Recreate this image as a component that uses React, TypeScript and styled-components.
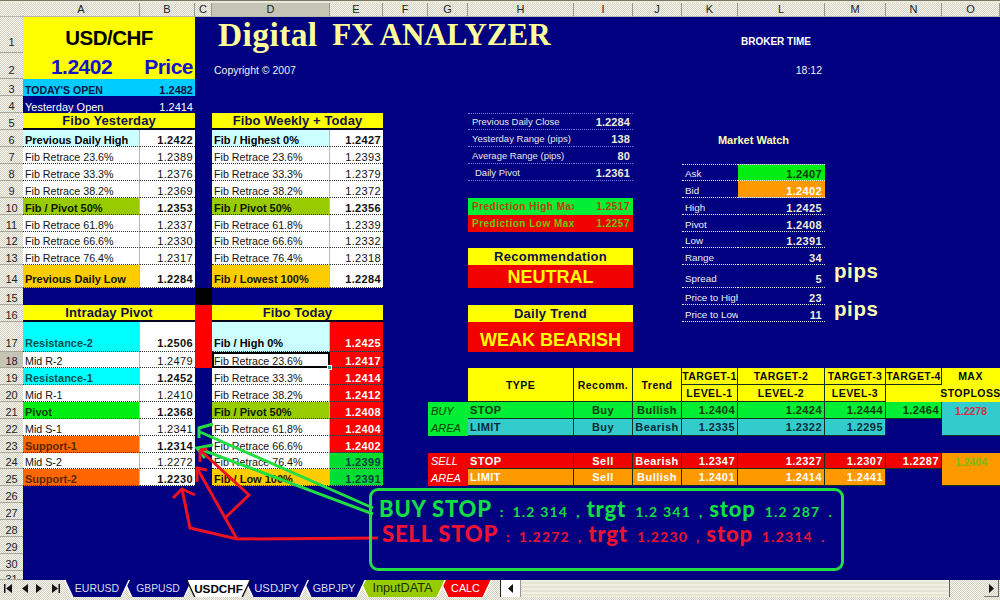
import React, { FC } from 'react';
import styled, { createGlobalStyle, css } from 'styled-components';

const COLUMNS: [string, number][] = [
  ['A', 117], ['B', 55], ['C', 17], ['D', 118], ['E', 53], ['F', 45], ['G', 40], ['H', 106],
  ['I', 59], ['J', 49], ['K', 56], ['L', 87], ['M', 61], ['N', 56], ['O', 58],
];
const ROWS = [
  36, 26, 17, 17, 17, 17, 17, 17, 17, 17, 17, 16, 17, 23, 17, 17, 30, 16, 17, 17, 17, 17, 17, 16, 17, 17, 17, 17, 17,
  17, 9,
];
const NAVY = '#000080';
const CHECKER = css`
  background: repeating-conic-gradient(#f7f6ee 0 25%, #d3d1c2 0 50%) 0 0 / 2px 2px;
`;

const GlobalStyle = createGlobalStyle`
  html, body { margin: 0; padding: 0; background: #ece9d8; }
  body { font-family: "Liberation Sans", Arial, sans-serif; }
`;

const Page = styled.div`
  position: relative;
  width: 1000px;
  height: 600px;
  overflow: hidden;
  display: flex;
  flex-direction: column;
  ${CHECKER}
`;

const TopEdge = styled.div`
  height: 3px;
  background: #ece9d8;
  border-top: 1px solid #77776a;
  box-sizing: border-box;
`;

const Sheet = styled.div`
  display: grid;
  grid-template-columns: 23px ${COLUMNS.map(([, w]) => `${w}px`).join(' ')};
  grid-template-rows: 14px ${ROWS.map((h) => `${h}px`).join(' ')};
  background: ${NAVY};
  font-size: 11px;
`;

const colIndex = (letter: string) => COLUMNS.findIndex(([l]) => l === letter) + 2;

// rows 14 and 17 are taller, their text sits a little higher than the bottom edge
const liftFor = (row: number) => (row === 1 ? 4 : row === 2 || row === 14 || row === 17 ? 2 : 0);

const ColHead = styled.div<{ $on?: boolean }>`
  ${CHECKER}
  ${(p) => p.$on && 'background: #c6c4b4;'}
  border-right: 1px solid #9a9a8c;
  border-bottom: 1px solid #b8b6a6;
  box-sizing: border-box;
  color: #222;
  font-size: 11px;
  line-height: 13px;
  text-align: center;
`;

const Corner = styled.div`
  ${CHECKER}
  border-bottom: 1px solid #b8b6a6;
`;

const RowHead = styled.div<{ $r: number; $on?: boolean }>`
  grid-column: 1;
  grid-row: ${(p) => p.$r + 1};
  ${CHECKER}
  ${(p) => p.$on && 'background: #c6c4b4;'}
  border-bottom: 1px solid #a8a698;
  box-sizing: border-box;
  display: flex;
  align-items: ${(p) => (p.$r === 31 ? 'flex-start' : 'flex-end')};
  justify-content: center;
  overflow: hidden;
  color: #222;
  font-size: 11px;
  line-height: 12px;
  padding-bottom: ${(p) => liftFor(p.$r)}px;
  padding-top: ${(p) => (p.$r === 31 ? 2 : 0)}px;
`;

type Place = { $c: string; $r: number; $cs?: number; $rs?: number };

const Cell = styled.div<Place>`
  grid-column: ${(p) => colIndex(p.$c)} / span ${(p) => p.$cs ?? 1};
  grid-row: ${(p) => p.$r + 1} / span ${(p) => p.$rs ?? 1};
  display: flex;
  align-items: flex-end;
  box-sizing: border-box;
  min-width: 0;
  padding: 0 2px ${(p) => liftFor(p.$r)}px 2px;
  line-height: 12px;
  white-space: pre;
`;

const Symbol = styled(Cell)`
  justify-content: center;
  align-items: center;
  background: #ffff00;
  color: #000;
  font-size: 20.5px;
  font-weight: 700;
  letter-spacing: -0.5px;
  line-height: 24px;
  padding: 5px 0 0;
`;

const PriceBig = styled(Cell)<{ $right?: boolean }>`
  background: #ffff00;
  color: #1414c8;
  font-size: 21px;
  font-weight: 700;
  letter-spacing: -0.5px;
  line-height: 24px;
  align-items: center;
  justify-content: ${(p) => (p.$right ? 'flex-end' : 'center')};
  padding-top: 2px;
  padding-bottom: 0;
`;

const OpenRow = styled(Cell)<{ $value?: boolean; $today?: boolean }>`
  ${(p) => (p.$today ? 'background: #00ccff; color: #04143c; font-weight: 700; font-size: 10.5px;' : 'color: #fff;')}
  ${(p) => p.$value && 'justify-content: flex-end; font-size: 11px;'}
`;

const Heading = styled(Cell)`
  background: #ffff00;
  color: #10104c;
  justify-content: center;
  align-items: center;
  font-size: 13px;
  font-weight: 700;
  letter-spacing: 0.1px;
  line-height: 15px;
  border-bottom: 2px solid #05051f;
`;

const BannerHead = styled(Heading)`
  letter-spacing: 0.28px;
  border-bottom: none;
`;

type Tone = 'plain' | 'ice' | 'olive' | 'amber' | 'cyan' | 'lime' | 'orange';
const TONES: Record<Tone, { bg: string; fg: string; bold: boolean }> = {
  plain: { bg: '#fff', fg: '#111', bold: false },
  ice: { bg: '#ccffff', fg: '#000', bold: true },
  olive: { bg: '#99cc00', fg: '#0a1a00', bold: true },
  amber: { bg: '#ffcc00', fg: '#141000', bold: true },
  cyan: { bg: '#00ffff', fg: '#004f4f', bold: true },
  lime: { bg: '#00ee11', fg: '#0a3a0a', bold: true },
  orange: { bg: '#ff6600', fg: '#5a2800', bold: true },
};

const RowLabel = styled(Cell)<{ $tone: Tone }>`
  background: ${(p) => TONES[p.$tone].bg};
  color: ${(p) => TONES[p.$tone].fg};
  font-size: ${(p) => (TONES[p.$tone].bold ? 11 : 10.7)}px;
  font-weight: ${(p) => (TONES[p.$tone].bold ? 700 : 400)};
  border-bottom: 1px dotted #333;
  border-right: 1px solid #bbb;
`;

type ValueTone = 'auto' | 'red' | 'green';
const RowValue = styled(Cell)<{ $bold?: boolean; $fill?: ValueTone }>`
  background: ${(p) => (p.$fill === 'red' ? '#ff0000' : p.$fill === 'green' ? '#00dd33' : '#fff')};
  color: ${(p) => (p.$fill === 'red' ? '#fff' : p.$fill === 'green' ? '#0a4040' : '#111')};
  font-weight: ${(p) => (p.$bold || p.$fill === 'red' || p.$fill === 'green' ? 700 : 400)};
  justify-content: flex-end;
  letter-spacing: 0.35px;
  border-bottom: 1px dotted #333;
`;

const ActiveCell = styled(RowLabel)`
  position: relative;
  outline: 2px solid #000;
  outline-offset: -2px;
  align-items: center;
  padding-top: 3px;
  &::after {
    content: '';
    position: absolute;
    right: -3px;
    bottom: -3px;
    width: 5px;
    height: 5px;
    background: #33a0a0;
    border: 1px solid #fff;
    box-sizing: border-box;
  }
`;

const Gutter = styled(Cell)<{ $black?: boolean }>`
  background: ${(p) => (p.$black ? '#000' : '#ff0000')};
`;

const Title = styled(Cell)`
  align-items: center;
  padding: 0 0 0 6px;
  color: #ffff99;
  font-family: "Liberation Serif", "Times New Roman", serif;
  font-size: 33.5px;
  font-weight: 700;
  letter-spacing: 0.4px;
  line-height: 36px;
  span {
    margin-left: -3px;
    font-size: 31px;
    letter-spacing: 0;
  }
`;

const Caption = styled(Cell)`
  color: #f2f2f2;
  font-size: 10.5px;
  line-height: 18px;
  padding-bottom: 0;
`;

const BrokerLabel = styled(Cell)`
  color: #fff;
  font-size: 10px;
  font-weight: 700;
  align-items: center;
  padding: 14px 0 0 3px;
`;

const BrokerClock = styled(Caption)`
  justify-content: flex-end;
  padding-right: 3px;
`;

const StatLabel = styled(Cell)<{ $inset?: boolean; $lead?: boolean }>`
  color: #e8e8e8;
  font-size: 9.5px;
  padding-left: ${(p) => (p.$inset ? 7 : 4)}px;
  padding-bottom: 1px;
  border-bottom: 1px dotted #7676ff;
  ${(p) => p.$lead && 'border-top: 1px dotted #7676ff;'}
`;

const StatValue = styled(Cell)<{ $lead?: boolean }>`
  color: #eeeed8;
  font-weight: 700;
  justify-content: flex-end;
  padding: 0 3px 1px 0;
  letter-spacing: 0.1px;
  border-bottom: 1px dotted #7676ff;
  ${(p) => p.$lead && 'border-top: 1px dotted #7676ff;'}
`;

const Forecast = styled(Cell)<{ $high?: boolean; $value?: boolean }>`
  background: ${(p) => (p.$high ? '#00ee33' : '#f00000')};
  color: ${(p) => (p.$high ? '#c83c08' : '#66cc00')};
  font-size: 10px;
  font-weight: 700;
  letter-spacing: 0.5px;
  overflow: hidden;
  align-items: center;
  padding: 0 0 0 4px;
  ${(p) => p.$value && 'justify-content: flex-end; padding-right: 3px;'}
`;

const Verdict = styled(Cell)<{ $low?: boolean }>`
  background: #f00000;
  color: #ffff00;
  font-size: 18px;
  font-weight: 700;
  line-height: 20px;
  justify-content: center;
  align-items: center;
  padding: ${(p) => (p.$low ? 5 : 0)}px 0 0;
`;

const WatchTitle = styled(Cell)`
  color: #ffffb0;
  font-size: 11px;
  font-weight: 700;
  justify-content: center;
  padding: 0 0 0 0;
  padding-bottom: 1px;
`;

const WatchLabel = styled(Cell)<{ $lead?: boolean }>`
  color: #f0f0f0;
  font-size: 9.8px;
  overflow: hidden;
  padding-left: 3px;
  padding-right: 0;
  border-bottom: 1px dotted #e8e8ff;
  ${(p) => p.$lead && 'border-top: 1px dotted #e8e8ff;'}
`;

const WatchValue = styled(Cell)<{ $fill?: string; $ink?: string; $lead?: boolean }>`
  background: ${(p) => p.$fill ?? 'transparent'};
  color: ${(p) => p.$ink ?? '#eeeed8'};
  font-weight: 700;
  letter-spacing: 0.35px;
  justify-content: flex-end;
  padding-right: 3px;
  border-bottom: 1px dotted #e8e8ff;
  ${(p) => p.$lead && 'border-top: 1px dotted #e8e8ff;'}
`;

const Pips = styled(Cell)<{ $low?: boolean }>`
  color: #ffffb0;
  font-size: 20.5px;
  font-weight: 700;
  letter-spacing: 0.6px;
  line-height: 22px;
  align-items: center;
  padding: ${(p) => (p.$low ? '8px 0 0 9px' : '0 0 12px 9px')};
`;

const LINE = '#14301a';

const TradeHead = styled(Cell)<{ $open?: boolean }>`
  background: #ffff00;
  color: #0a0a18;
  font-size: 10.5px;
  font-weight: 700;
  letter-spacing: 0.45px;
  justify-content: center;
  align-items: center;
  padding: 0;
  border-right: 1px solid ${(p) => (p.$open ? '#ffff00' : LINE)};
  border-bottom: 1px solid ${(p) => (p.$open ? '#ffff00' : LINE)};
`;

const AreaTag = styled(Cell)<{ $sell?: boolean }>`
  background: ${(p) => (p.$sell ? '#f00000' : '#00ee33')};
  color: ${(p) => (p.$sell ? '#fff' : '#064006')};
  font-style: italic;
  font-size: 11px;
  padding-left: 3px;
  align-items: center;
`;

type Band = 'buy' | 'limit' | 'sell' | 'orange';
const BANDS: Record<Band, { bg: string; fg: string }> = {
  buy: { bg: '#00ee33', fg: '#0a3a0a' },
  limit: { bg: '#33cccc', fg: '#0a2a3a' },
  sell: { bg: '#f00000', fg: '#fff' },
  orange: { bg: '#ff9900', fg: '#fff' },
};

const TradeCell = styled(Cell)<{ $band: Band; $align: 'left' | 'center' | 'right' }>`
  background: ${(p) => BANDS[p.$band].bg};
  color: ${(p) => BANDS[p.$band].fg};
  font-weight: 700;
  font-size: 11px;
  letter-spacing: 0.45px;
  align-items: center;
  justify-content: ${(p) => ({ left: 'flex-start', center: 'center', right: 'flex-end' })[p.$align]};
  border-right: 1px solid ${LINE};
  border-bottom: 1px solid ${LINE};
`;

const StopLoss = styled(Cell)<{ $sell?: boolean }>`
  background: ${(p) => (p.$sell ? '#ff9900' : '#33cccc')};
  color: ${(p) => (p.$sell ? '#77bb11' : '#cc3344')};
  font-size: 10.5px;
  font-weight: 700;
  justify-content: center;
  align-items: flex-start;
  padding-top: 3px;
  border-bottom: 1px solid ${LINE};
`;

const TabBar = styled.div`
  display: flex;
  align-items: stretch;
  height: 17px;
  ${CHECKER}
`;

const TabNav = styled.div`
  width: 64px;
  display: flex;
  align-items: center;
  justify-content: space-around;
  padding: 0 1px;
  box-sizing: border-box;
`;

const Tabs = styled.div`
  display: flex;
  width: 433px;
`;

const Tab = styled.div<{ $w: number; $z: number; $bg: string; $ink: string; $size: number; $active?: boolean }>`
  position: relative;
  z-index: ${(p) => p.$z};
  width: ${(p) => p.$w}px;
  margin-right: -7px;
  flex: none;
  background: ${(p) => (p.$active ? '#111' : '#fff')};
  clip-path: polygon(0 0, 100% 0, calc(100% - 8px) 100%, 8px 100%);
  &::before {
    content: '';
    position: absolute;
    inset: 0 1.5px;
    background: ${(p) => p.$bg};
    clip-path: polygon(0 0, 100% 0, calc(100% - 8px) 100%, 8px 100%);
  }
  span {
    position: relative;
    display: block;
    text-align: center;
    color: ${(p) => p.$ink};
    font-size: ${(p) => p.$size}px;
    font-weight: ${(p) => (p.$active ? 700 : 400)};
    line-height: 17px;
    white-space: nowrap;
  }
`;

const ScrollLeft = styled.div`
  width: 21px;
  margin-left: 3px;
  display: flex;
  align-items: center;
  justify-content: center;
  background: #fff;
  border-left: 1px solid #222;
  border-right: 1px solid #999;
  box-sizing: border-box;
`;

const ScrollTrack = styled.div`
  width: 428px;
  margin-left: 1px;
  background: repeating-linear-gradient(180deg, #f1efe2 0 2px, #e6e4d2 2px 4px);
  border-right: 1px solid #666;
  box-sizing: border-box;
`;

const ScrollRest = styled.div`
  width: 34px;
`;

const ScrollRight = styled.div`
  width: 15px;
  display: flex;
  align-items: center;
  justify-content: center;
  border-right: 1px solid #666;
  border-bottom: 1px solid #777;
  box-sizing: border-box;
`;

const Overlay = styled.svg`
  position: absolute;
  inset: 0;
  pointer-events: none;
`;

const CallBox = styled.div`
  position: absolute;
  left: 369px;
  top: 488px;
  width: 475px;
  height: 83px;
  box-sizing: border-box;
  padding: 5px 0 0 7px;
  border: 3px solid #22dd44;
  border-radius: 9px;
`;

const CallLine = styled.div<{ $sell?: boolean }>`
  color: ${(p) => (p.$sell ? '#ee1133' : '#11dd44')};
  font-family: Lato, "Liberation Sans", sans-serif;
  height: 25px;
  line-height: 25px;
  white-space: pre;
  ${(p) => p.$sell && 'padding-left: 3px;'}
`;

const CallWord = styled.span`
  font-size: 22px;
  font-weight: 900;
  letter-spacing: 0.8px;
`;

const CallNum = styled.span`
  font-size: 14px;
  font-weight: 700;
  letter-spacing: 1.2px;
  margin-left: 9px;
`;

const CallMark = styled.span`
  font-size: 14px;
  font-weight: 900;
  margin: 0 7px 0 8px;
`;

const CallColon = styled(CallMark)`
  margin-right: 0;
`;

const YESTERDAY: [string, string, Tone][] = [
  ['Previous Daily High', '1.2422', 'ice'],
  ['Fib Retrace 23.6%', '1.2389', 'plain'],
  ['Fib Retrace 33.3%', '1.2376', 'plain'],
  ['Fib Retrace 38.2%', '1.2369', 'plain'],
  ['Fib / Pivot 50%', '1.2353', 'olive'],
  ['Fib Retrace 61.8%', '1.2337', 'plain'],
  ['Fib Retrace 66.6%', '1.2330', 'plain'],
  ['Fib Retrace 76.4%', '1.2317', 'plain'],
  ['Previous Daily Low', '1.2284', 'amber'],
];
const WEEKLY: [string, string, Tone][] = [
  ['Fib / Highest 0%', '1.2427', 'ice'],
  ['Fib Retrace 23.6%', '1.2393', 'plain'],
  ['Fib Retrace 33.3%', '1.2379', 'plain'],
  ['Fib Retrace 38.2%', '1.2372', 'plain'],
  ['Fib / Pivot 50%', '1.2356', 'olive'],
  ['Fib Retrace 61.8%', '1.2339', 'plain'],
  ['Fib Retrace 66.6%', '1.2332', 'plain'],
  ['Fib Retrace 76.4%', '1.2318', 'plain'],
  ['Fib / Lowest 100%', '1.2284', 'amber'],
];
const PIVOTS: [string, string, Tone][] = [
  ['Resistance-2', '1.2506', 'cyan'],
  ['Mid R-2', '1.2479', 'plain'],
  ['Resistance-1', '1.2452', 'cyan'],
  ['Mid R-1', '1.2410', 'plain'],
  ['Pivot', '1.2368', 'lime'],
  ['Mid S-1', '1.2341', 'plain'],
  ['Support-1', '1.2314', 'orange'],
  ['Mid S-2', '1.2272', 'plain'],
  ['Support-2', '1.2230', 'orange'],
];
const TODAY: [string, string, Tone, ValueTone][] = [
  ['Fib / High 0%', '1.2425', 'ice', 'red'],
  ['Fib Retrace 23.6%', '1.2417', 'plain', 'red'],
  ['Fib Retrace 33.3%', '1.2414', 'plain', 'red'],
  ['Fib Retrace 38.2%', '1.2412', 'plain', 'red'],
  ['Fib / Pivot 50%', '1.2408', 'olive', 'red'],
  ['Fib Retrace 61.8%', '1.2404', 'plain', 'red'],
  ['Fib Retrace 66.6%', '1.2402', 'plain', 'red'],
  ['Fib Retrace 76.4%', '1.2399', 'plain', 'green'],
  ['Fib / Low 100%', '1.2391', 'amber', 'green'],
];
const STATS: [string, string, boolean][] = [
  ['Previous Daily Close', '1.2284', false],
  ['Yesterday Range (pips)', '138', false],
  ['Average Range (pips)', '80', false],
  ['Daily Pivot', '1.2361', true],
];
const WATCH: [string, string, string?, string?][] = [
  ['Ask', '1.2407', '#00ee11', '#0a3a0a'],
  ['Bid', '1.2402', '#ff9900', '#fff'],
  ['High', '1.2425'],
  ['Pivot', '1.2408'],
  ['Low', '1.2391'],
  ['Range', '34'],
  ['Spread', '5'],
  ['Price to High', '23'],
  ['Price to Low', '11'],
];
const TRADES: { row: number; band: Band; type: string; rec: string; trend: string; levels: string[] }[] = [
  { row: 21, band: 'buy', type: 'STOP', rec: 'Buy', trend: 'Bullish', levels: ['1.2404', '1.2424', '1.2444', '1.2464'] },
  { row: 22, band: 'limit', type: 'LIMIT', rec: 'Buy', trend: 'Bearish', levels: ['1.2335', '1.2322', '1.2295'] },
  { row: 24, band: 'sell', type: 'STOP', rec: 'Sell', trend: 'Bearish', levels: ['1.2347', '1.2327', '1.2307', '1.2287'] },
  { row: 25, band: 'orange', type: 'LIMIT', rec: 'Sell', trend: 'Bullish', levels: ['1.2401', '1.2414', '1.2441'] },
];
const SHEETS = [
  { name: 'EURUSD', w: 66, size: 10.5, bg: NAVY, ink: '#d8dcf0' },
  { name: 'GBPUSD', w: 70, size: 10.3, bg: NAVY, ink: '#d8dcf0' },
  { name: 'USDCHF', w: 65, size: 11.7, bg: '#fff', ink: '#000', active: true },
  { name: 'USDJPY', w: 65, size: 11.3, bg: NAVY, ink: '#d8dcf0' },
  { name: 'GBPJPY', w: 64, size: 10.8, bg: NAVY, ink: '#d8dcf0' },
  { name: 'InputDATA', w: 87, size: 12.7, bg: '#99cc00', ink: '#143000' },
  { name: 'CALC', w: 53, size: 10.8, bg: '#f00000', ink: '#fff' },
];

const LEVEL_COLS = ['K', 'L', 'M', 'N'];

const NavIcon: FC<{ points: string; bar?: number }> = ({ points, bar }) => (
  <svg width="9" height="9" viewBox="0 0 9 9">
    <polygon points={points} fill="#111" />
    {bar !== undefined && <rect x={bar} y="0" width="1.5" height="9" fill="#111" />}
  </svg>
);

const App: FC = () => {
  return (
    <>
      <GlobalStyle />
      <Page>
        <TopEdge />
        <Sheet>
          <Corner />
          {COLUMNS.map(([l]) => (
            <ColHead key={l} $on={l === 'D'}>
              {l}
            </ColHead>
          ))}
          {ROWS.map((_, i) => (
            <RowHead key={i} $r={i + 1} $on={i === 17}>
              {i + 1}
            </RowHead>
          ))}

          <Symbol $c="A" $r={1} $cs={2}>
            USD/CHF
          </Symbol>
          <PriceBig $c="A" $r={2}>1.2402</PriceBig>
          <PriceBig $c="B" $r={2} $right>Price</PriceBig>
          <OpenRow $c="A" $r={3} $today>TODAY'S OPEN</OpenRow>
          <OpenRow $c="B" $r={3} $today $value>1.2482</OpenRow>
          <OpenRow $c="A" $r={4}>Yesterday Open</OpenRow>
          <OpenRow $c="B" $r={4} $value>1.2414</OpenRow>

          <Title $c="D" $r={1}>
            {'Digital  '}
            <span>FX ANALYZER</span>
          </Title>
          <Caption $c="D" $r={2}>Copyright © 2007</Caption>
          <BrokerLabel $c="L" $r={1}>BROKER TIME</BrokerLabel>
          <BrokerClock $c="L" $r={2}>18:12</BrokerClock>

          <Heading $c="A" $r={5} $cs={2}>Fibo Yesterday</Heading>
          <Heading $c="D" $r={5} $cs={2}>Fibo Weekly + Today</Heading>
          {YESTERDAY.map(([label, value, tone], i) => (
            <React.Fragment key={label}>
              <RowLabel $c="A" $r={i + 6} $tone={tone}>{label}</RowLabel>
              <RowValue $c="B" $r={i + 6} $bold={tone !== 'plain'}>{value}</RowValue>
            </React.Fragment>
          ))}
          {WEEKLY.map(([label, value, tone], i) => (
            <React.Fragment key={label}>
              <RowLabel $c="D" $r={i + 6} $tone={tone}>{label}</RowLabel>
              <RowValue $c="E" $r={i + 6} $bold={tone !== 'plain'}>{value}</RowValue>
            </React.Fragment>
          ))}

          <Gutter $c="C" $r={15} $black />
          <Gutter $c="C" $r={16} $rs={3} />

          <Heading $c="A" $r={16} $cs={2}>Intraday Pivot</Heading>
          <Heading $c="D" $r={16} $cs={2}>Fibo Today</Heading>
          {PIVOTS.map(([label, value, tone], i) => (
            <React.Fragment key={label}>
              <RowLabel $c="A" $r={i + 17} $tone={tone}>{label}</RowLabel>
              <RowValue $c="B" $r={i + 17} $bold={tone !== 'plain'}>{value}</RowValue>
            </React.Fragment>
          ))}
          {TODAY.map(([label, value, tone, fill], i) =>
            i === 1 ? (
              <React.Fragment key={label}>
                <ActiveCell $c="D" $r={18} $tone="plain">{label}</ActiveCell>
                <RowValue $c="E" $r={18} $fill={fill}>{value}</RowValue>
              </React.Fragment>
            ) : (
              <React.Fragment key={label}>
                <RowLabel $c="D" $r={i + 17} $tone={tone}>{label}</RowLabel>
                <RowValue $c="E" $r={i + 17} $fill={fill}>{value}</RowValue>
              </React.Fragment>
            ),
          )}

          {STATS.map(([label, value, inset], i) => (
            <React.Fragment key={label}>
              <StatLabel $c="H" $r={i + 5} $inset={inset} $lead={i === 0}>{label}</StatLabel>
              <StatValue $c="I" $r={i + 5} $lead={i === 0}>{value}</StatValue>
            </React.Fragment>
          ))}
          <Forecast $c="H" $r={10} $high>Prediction High Max</Forecast>
          <Forecast $c="I" $r={10} $high $value>1.2517</Forecast>
          <Forecast $c="H" $r={11}>Prediction Low Max</Forecast>
          <Forecast $c="I" $r={11} $value>1.2257</Forecast>
          <BannerHead $c="H" $r={13} $cs={2}>Recommendation</BannerHead>
          <Verdict $c="H" $r={14} $cs={2}>NEUTRAL</Verdict>
          <BannerHead $c="H" $r={16} $cs={2}>Daily Trend</BannerHead>
          <Verdict $c="H" $r={17} $cs={2} $low>WEAK BEARISH</Verdict>

          <WatchTitle $c="K" $r={6} $cs={2}>Market Watch</WatchTitle>
          {WATCH.map(([label, value, fill, ink], i) => (
            <React.Fragment key={label}>
              <WatchLabel $c="K" $r={i + 8} $lead={i === 0}>{label}</WatchLabel>
              <WatchValue $c="L" $r={i + 8} $fill={fill} $ink={ink} $lead={i === 0}>{value}</WatchValue>
            </React.Fragment>
          ))}
          <Pips $c="M" $r={14}>pips</Pips>
          <Pips $c="M" $r={15} $rs={2} $low>pips</Pips>

          <TradeHead $c="H" $r={19} $rs={2}>TYPE</TradeHead>
          <TradeHead $c="I" $r={19} $rs={2}>Recomm.</TradeHead>
          <TradeHead $c="J" $r={19} $rs={2}>Trend</TradeHead>
          <TradeHead $c="K" $r={19}>TARGET-1</TradeHead>
          <TradeHead $c="L" $r={19}>TARGET-2</TradeHead>
          <TradeHead $c="M" $r={19}>TARGET-3</TradeHead>
          <TradeHead $c="N" $r={19}>TARGET-4</TradeHead>
          <TradeHead $c="O" $r={19} $open>MAX</TradeHead>
          <TradeHead $c="K" $r={20}>LEVEL-1</TradeHead>
          <TradeHead $c="L" $r={20}>LEVEL-2</TradeHead>
          <TradeHead $c="M" $r={20}>LEVEL-3</TradeHead>
          <TradeHead $c="N" $r={20} $open />
          <TradeHead $c="O" $r={20} $open>STOPLOSS</TradeHead>

          <AreaTag $c="G" $r={21}>BUY</AreaTag>
          <AreaTag $c="G" $r={22}>AREA</AreaTag>
          <AreaTag $c="G" $r={24} $sell>SELL</AreaTag>
          <AreaTag $c="G" $r={25} $sell>AREA</AreaTag>
          {TRADES.map((t) => (
            <React.Fragment key={t.row}>
              <TradeCell $c="H" $r={t.row} $band={t.band} $align="left">{t.type}</TradeCell>
              <TradeCell $c="I" $r={t.row} $band={t.band} $align="center">{t.rec}</TradeCell>
              <TradeCell $c="J" $r={t.row} $band={t.band} $align="center">{t.trend}</TradeCell>
              {t.levels.map((level, i) => (
                <TradeCell key={level} $c={LEVEL_COLS[i]} $r={t.row} $band={t.band} $align="right">
                  {level}
                </TradeCell>
              ))}
            </React.Fragment>
          ))}
          <StopLoss $c="O" $r={21} $rs={2}>1.2278</StopLoss>
          <StopLoss $c="O" $r={24} $rs={2} $sell>1.2404</StopLoss>
        </Sheet>

        <TabBar>
          <TabNav>
            <NavIcon points="8,0 8,9 2,4.5" bar={0} />
            <NavIcon points="8,0 8,9 2,4.5" />
            <NavIcon points="1,0 1,9 7,4.5" />
            <NavIcon points="1,0 1,9 7,4.5" bar={7.5} />
          </TabNav>
          <Tabs>
            {SHEETS.map((s, i) => (
              <Tab
                key={s.name}
                $w={s.w}
                $size={s.size}
                $z={s.active ? 20 : 10 - i}
                $bg={s.bg}
                $ink={s.ink}
                $active={s.active}
              >
                <span>{s.name}</span>
              </Tab>
            ))}
          </Tabs>
          <ScrollLeft>
            <NavIcon points="7,0 7,9 2,4.5" />
          </ScrollLeft>
          <ScrollTrack />
          <ScrollRest />
          <ScrollRight>
            <NavIcon points="2,0 2,9 7,4.5" />
          </ScrollRight>
        </TabBar>

        <Overlay width="1000" height="600" viewBox="0 0 1000 600">
          <g fill="none" stroke="#22dd44" strokeWidth="3">
            <path d="M373 508 L200 432" />
            <path d="M213 424 L199 428 L199 438" />
            <path d="M373 514 L197 448" />
            <path d="M213 445 L197 448 L205 458" />
          </g>
          <g fill="none" stroke="#ee1122" strokeWidth="3">
            <path d="M378 538 L237 539 L190 528 L182 489" />
            <path d="M173 498 L182 489 L195 495" />
            <path d="M237 539 L197 468" />
            <path d="M197 482 L197 468 L207 470" />
            <path d="M225 518 L249 495 L200 450" />
            <path d="M200 450 L200 462" />
            <path d="M207 449 L200 450" />
          </g>
        </Overlay>
        <CallBox>
          <CallLine>
            <CallWord>BUY STOP</CallWord>
            <CallColon>:</CallColon>
            <CallNum>1.2 314</CallNum>
            <CallMark>,</CallMark>
            <CallWord>trgt</CallWord>
            <CallNum>1.2 341</CallNum>
            <CallMark>,</CallMark>
            <CallWord>stop</CallWord>
            <CallNum>1.2 287</CallNum>
            <CallMark>.</CallMark>
          </CallLine>
          <CallLine $sell>
            <CallWord>SELL STOP</CallWord>
            <CallColon>:</CallColon>
            <CallNum>1.2272</CallNum>
            <CallMark>,</CallMark>
            <CallWord>trgt</CallWord>
            <CallNum>1.2230</CallNum>
            <CallMark>,</CallMark>
            <CallWord>stop</CallWord>
            <CallNum>1.2314</CallNum>
            <CallMark>.</CallMark>
          </CallLine>
        </CallBox>
      </Page>
    </>
  );
};

export default App;
